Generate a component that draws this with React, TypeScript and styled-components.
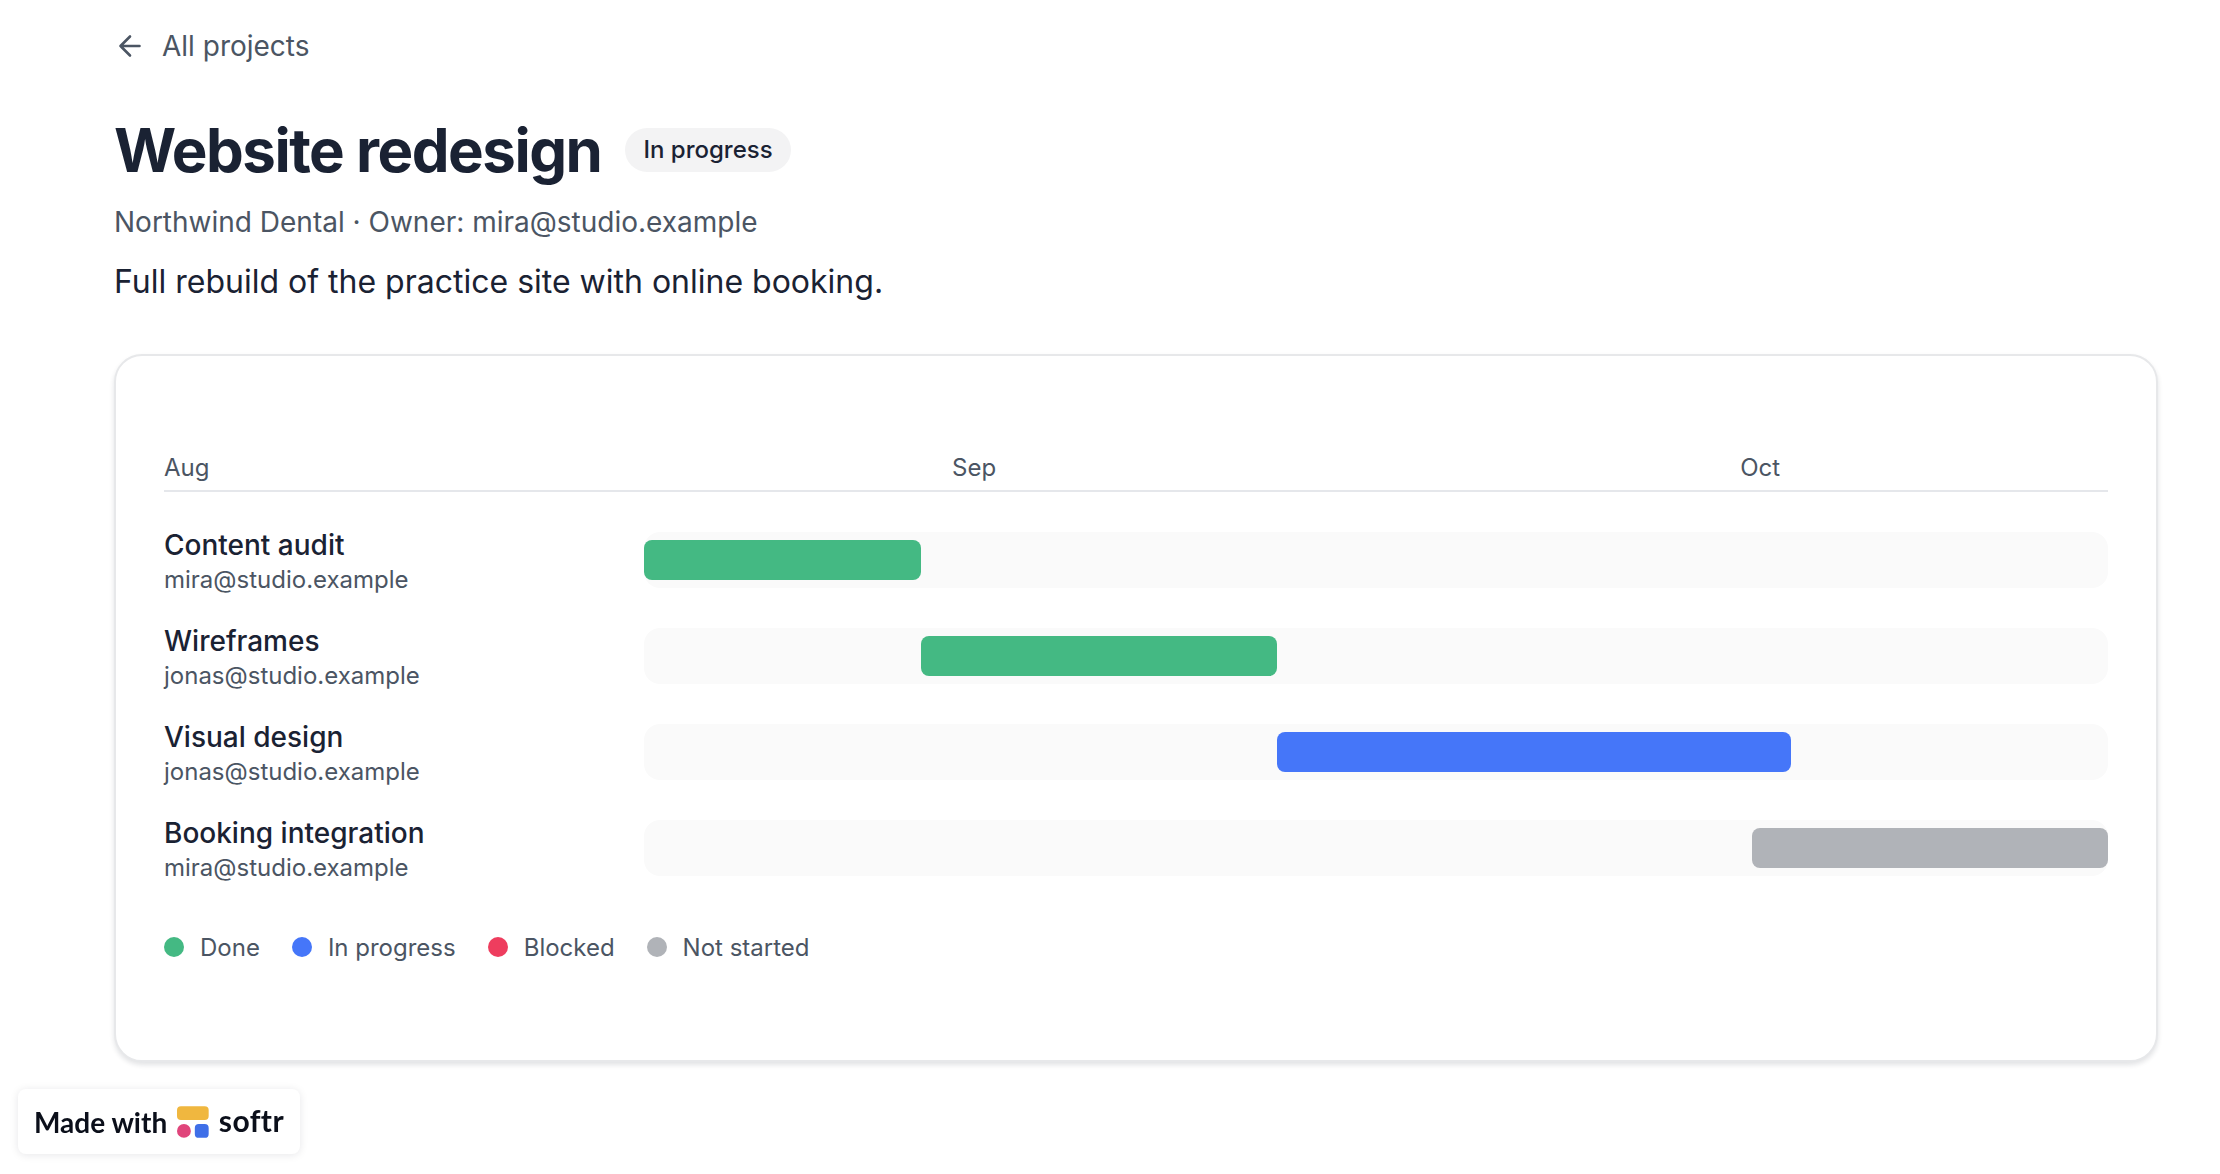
import React from "react";
import styled, { createGlobalStyle } from "styled-components";

const Global = createGlobalStyle`
  html, body { margin: 0; padding: 0; background: #fff; }
  body { font-family: Inter, "Liberation Sans", sans-serif; color: #1a2233; -webkit-font-smoothing: antialiased; }
`;

const Page = styled.main`
  box-sizing: border-box;
  width: 2220px;
  height: 1174px;
  padding: 26px 62px 0 114px;
  overflow: hidden;
`;

const BackLink = styled.a`
  display: flex;
  align-items: center;
  gap: 16px;
  height: 40px;
  font-size: 28px;
  line-height: 40px;
  color: #4b5563;
  text-decoration: none;
`;

const TitleRow = styled.div`
  display: flex;
  align-items: center;
  gap: 24px;
  margin-top: 48px;
  height: 72px;
`;

const Title = styled.h1`
  margin: 0;
  font-size: 60px;
  line-height: 72px;
  font-weight: 700;
  letter-spacing: -1.5px;
  color: #1a2233;
`;

const Chip = styled.span`
  display: inline-flex;
  align-items: center;
  height: 44px;
  padding: 0 18px 2px;
  box-sizing: border-box;
  border-radius: 22px;
  background: #f3f3f4;
  font-size: 24px;
  font-weight: 500;
  color: #1a2233;
`;

const Meta = styled.p`
  margin: 16px 0 0;
  font-size: 28px;
  line-height: 40px;
  color: #4b5563;
`;

const Description = styled.p`
  margin: 16px 0 0;
  font-size: 32px;
  line-height: 48px;
  color: #1a2233;
`;

const Card = styled.section`
  box-sizing: border-box;
  width: 2044px;
  height: 708px;
  margin-top: 48px;
  padding: 91px 48px 0;
  border: 2px solid #e7e8ea;
  border-radius: 28px;
  background: #fff;
  box-shadow: 0 3px 5px rgba(17, 24, 39, 0.12);
`;

const Months = styled.div`
  display: grid;
  grid-template-columns: 30fr 30fr 14fr;
  height: 40px;
  align-items: center;
  padding-bottom: 3px;
  border-bottom: 2px solid #e5e7eb;
  font-size: 24px;
  color: #4b5563;
`;

const Rows = styled.div`
  display: flex;
  flex-direction: column;
  gap: 28px;
  margin-top: 34px;
`;

const Row = styled.div`
  display: grid;
  grid-template-columns: 480px 1fr;
  align-items: center;
  height: 68px;
`;

const TaskInfo = styled.div`
  padding-top: 1px;
`;

const TaskName = styled.div`
  font-size: 28px;
  line-height: 36px;
  font-weight: 500;
  color: #1a2233;
`;

const TaskOwner = styled.div`
  margin-top: 1px;
  font-size: 24px;
  line-height: 32px;
  color: #4b5563;
`;

const Track = styled.div`
  position: relative;
  height: 56px;
  margin-bottom: 2px;
  border-radius: 16px;
  background: #fafafa;
`;

const Bar = styled.div<{ $color: string }>`
  position: absolute;
  top: 8px;
  bottom: 8px;
  border-radius: 8px;
  background: ${(p) => p.$color};
`;

const Legend = styled.div`
  display: flex;
  gap: 32px;
  margin-top: 49px;
  height: 32px;
  align-items: center;
  font-size: 24px;
  color: #4b5563;
`;

const LegendItem = styled.div`
  display: flex;
  align-items: center;
  gap: 16px;
`;

const Dot = styled.span<{ $color: string }>`
  width: 20px;
  height: 20px;
  border-radius: 50%;
  background: ${(p) => p.$color};
`;

const Badge = styled.a`
  position: fixed;
  left: 18px;
  top: 1089px;
  box-sizing: border-box;
  display: flex;
  align-items: center;
  gap: 10px;
  width: 282px;
  height: 65px;
  padding: 0 16px;
  border-radius: 8px;
  background: #fff;
  box-shadow: 0 1px 8px rgba(17, 24, 39, 0.1);
  font-family: Lato, Inter, sans-serif;
  font-size: 28px;
  font-weight: 700;
  color: #0b0f1a;
  white-space: nowrap;
`;

const SoftrWord = styled.span`
  font-size: 30px;
  letter-spacing: 0.4px;
  margin-top: -3px;
`;

const GREEN = "#44b983";
const BLUE = "#4576f9";
const RED = "#ee3d5e";
const GRAY = "#b0b3b8";

const tasks = [
  { name: "Content audit", owner: "mira@studio.example", start: 0, len: 14, color: GREEN },
  { name: "Wireframes", owner: "jonas@studio.example", start: 14, len: 18, color: GREEN },
  { name: "Visual design", owner: "jonas@studio.example", start: 32, len: 26, color: BLUE },
  { name: "Booking integration", owner: "mira@studio.example", start: 56, len: 18, color: GRAY },
];

const legend = [
  { label: "Done", color: GREEN },
  { label: "In progress", color: BLUE },
  { label: "Blocked", color: RED },
  { label: "Not started", color: GRAY },
];

const ArrowLeft = () => (
  <svg width="32" height="32" viewBox="0 0 32 32" fill="none" stroke="#4b5563" strokeWidth="2.6" strokeLinecap="round" strokeLinejoin="round">
    <path d="M25.5 16H6.5M16 6.5 6.5 16l9.5 9.5" />
  </svg>
);

const SoftrMark = () => (
  <svg width="32" height="32" viewBox="0 0 32 32">
    <rect x="0" y="0" width="32" height="14" rx="4" fill="#f0b73f" />
    <circle cx="7" cy="25" r="7" fill="#e0457b" />
    <rect x="18" y="18" width="14" height="14" rx="4" fill="#3f6fe8" />
  </svg>
);

export default function App() {
  return (
    <Page>
      <Global />
      <BackLink>
        <ArrowLeft />
        All projects
      </BackLink>
      <TitleRow>
        <Title>Website redesign</Title>
        <Chip>In progress</Chip>
      </TitleRow>
      <Meta>Northwind Dental · Owner: mira@studio.example</Meta>
      <Description>Full rebuild of the practice site with online booking.</Description>
      <Card>
        <Months>
          <span>Aug</span>
          <span>Sep</span>
          <span>Oct</span>
        </Months>
        <Rows>
          {tasks.map((t) => (
            <Row key={t.name}>
              <TaskInfo>
                <TaskName>{t.name}</TaskName>
                <TaskOwner>{t.owner}</TaskOwner>
              </TaskInfo>
              <Track>
                <Bar
                  $color={t.color}
                  style={{ left: `${(t.start / 74) * 100}%`, width: `${(t.len / 74) * 100}%` }}
                />
              </Track>
            </Row>
          ))}
        </Rows>
        <Legend>
          {legend.map((l) => (
            <LegendItem key={l.label}>
              <Dot $color={l.color} />
              {l.label}
            </LegendItem>
          ))}
        </Legend>
      </Card>
      <Badge>
        Made with
        <SoftrMark />
        <SoftrWord>softr</SoftrWord>
      </Badge>
    </Page>
  );
}
